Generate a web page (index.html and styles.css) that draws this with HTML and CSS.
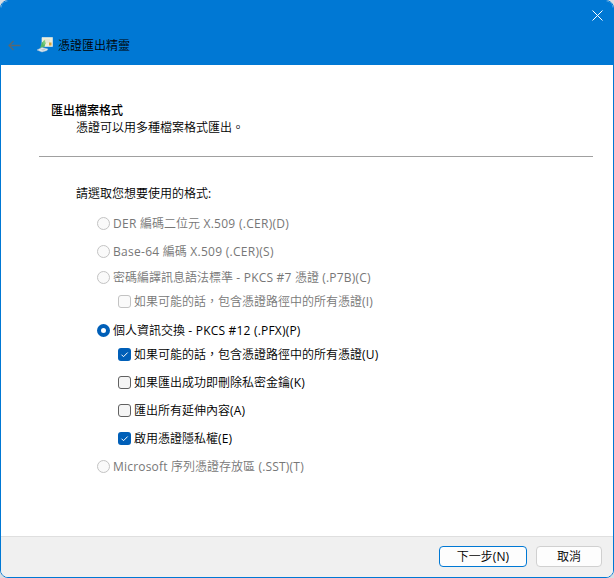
FILE: index.html
```html
<!DOCTYPE html>
<html lang="zh-Hant">
<head>
<meta charset="utf-8">
<title>憑證匯出精靈</title>
<link rel="stylesheet" href="styles.css">
</head>
<body>
<main class="window">
  <header class="titlebar">
    <div class="caption">
      <svg class="close" width="11" height="11" viewBox="0 0 11 11"><path d="M.5.5l10 10M10.500.5l-10 10"/></svg>
    </div>
    <div class="heading">
      <svg class="back" width="13" height="11" viewBox="0 0 13 11"><path d="M12.500 5.500H1M5.500 1L1 5.500L5.500 10"/></svg>
      <svg class="app-icon" width="17" height="16" viewBox="0 0 17 16">
        <path d="M5 .5h10.500v9H5z" fill="#eeeed8" stroke="#dce6e2" stroke-width=".7"/>
        <path d="M7 3h6M8 5h5" stroke="#cfd8cb" stroke-width=".8"/>
        <path d="M12 5.500h2.500v3H12z" fill="#d9a437"/>
        <path d="M5 5.500l2-1.500 1.500 2-1 4-4.500 1z" fill="#55b566"/>
        <path d="M6 4l2-1 .5 4-2 1z" fill="#7fce7e"/>
        <path d="M0 13l5-2.500 6 1.500-1 1.500-5 1.500z" fill="#e3ebf0" stroke="#a9bfce" stroke-width=".5"/>
        <path d="M3 12.700l4-1 2 .7-3 1.300z" fill="#b9c9d4"/>
      </svg>
      <h1 class="title">憑證匯出精靈</h1>
    </div>
  </header>
  <section class="intro">
    <h2 class="intro-title">匯出檔案格式</h2>
    <p class="intro-text">憑證可以用多種檔案格式匯出。</p>
  </section>
  <section class="options">
    <p class="prompt">請選取您想要使用的格式<span class="latin">:</span></p>
    <div class="row disabled wide"><span class="radio"></span><span class="label"><span class="latin">DER </span>編碼二位元<span class="latin"> X.509 (.CER)(D)</span></span></div>
    <div class="row disabled wide"><span class="radio"></span><span class="label"><span class="latin">Base-64 </span>編碼<span class="latin"> X.509 (.CER)(S)</span></span></div>
    <div class="row disabled short"><span class="radio"></span><span class="label">密碼編譯訊息語法標準<span class="latin"> - PKCS #7 </span>憑證<span class="latin"> (.P7B)(C)</span></span></div>
    <div class="row disabled sub"><span class="check"></span><span class="label">如果可能的話，包含憑證路徑中的所有憑證<span class="latin">(I)</span></span></div>
    <div class="row main"><span class="radio on"></span><span class="label">個人資訊交換<span class="latin"> - PKCS #12 (.PFX)(P)</span></span></div>
    <div class="row sub first"><span class="check on"><svg width="13" height="13" viewBox="0 0 13 13"><path d="M3.500 6.700L5.500 8.700L9.700 4.500"/></svg></span><span class="label">如果可能的話，包含憑證路徑中的所有憑證<span class="latin">(U)</span></span></div>
    <div class="row sub"><span class="check"></span><span class="label">如果匯出成功即刪除私密金鑰<span class="latin">(K)</span></span></div>
    <div class="row sub"><span class="check"></span><span class="label">匯出所有延伸內容<span class="latin">(A)</span></span></div>
    <div class="row sub"><span class="check on"><svg width="13" height="13" viewBox="0 0 13 13"><path d="M3.500 6.700L5.500 8.700L9.700 4.500"/></svg></span><span class="label">啟用憑證隱私權<span class="latin">(E)</span></span></div>
    <div class="row disabled"><span class="radio"></span><span class="label"><span class="latin">Microsoft </span>序列憑證存放區<span class="latin"> (.SST)(T)</span></span></div>
  </section>
  <footer class="footer">
    <button class="button primary">下一步<span class="latin">(N)</span></button>
    <button class="button">取消</button>
  </footer>
</main>
</body>
</html>
```
FILE: styles.css
```css
* {
  box-sizing: border-box;
}

body {
  margin: 0;
  background: #d9dde2;
  color: #000;
  font: 350 12px/16px "Open Sans", "Noto Sans CJK TC", sans-serif;
}

h1,
h2,
p {
  margin: 0;
  font-size: inherit;
  font-weight: inherit;
}

svg {
  display: block;
  flex: none;
  fill: none;
}

.window {
  display: flex;
  flex-direction: column;
  width: 614px;
  height: 578px;
  overflow: hidden;
  border: 1px solid #0078d4;
  border-radius: 8px;
  background: #fff;
}

.titlebar {
  height: 64px;
  background: #0078d4;
}

.caption {
  display: flex;
  justify-content: flex-end;
  height: 33px;
  padding: 9px 10px 0 0;
}

.close {
  stroke: #fff;
}

.heading {
  display: flex;
  align-items: center;
  height: 22px;
  padding-left: 7px;
}

.back {
  stroke: #5a6870;
  stroke-width: 1.3;
}

.app-icon {
  margin-left: 16px;
}

.title {
  padding-top: 2px;
  margin-left: 4px;
}

.intro {
  height: 92px;
  margin: 0 20px 0 38px;
  padding: 38px 0 0 12px;
  border-bottom: 1px solid #a0a0a0;
}

.intro-title {
  height: 17px;
  font-weight: 500;
}

.intro-text {
  padding-left: 25px;
}

.options {
  flex: 1;
  padding: 29px 0 0 75px;
}

.prompt {
  height: 23px;
}

.row {
  display: flex;
  align-items: center;
  gap: 3px;
  height: 28px;
  padding-left: 21px;
  white-space: nowrap;
}

.row.short {
  height: 25px;
}

.row.sub {
  padding-left: 42px;
}

.row.disabled.sub {
  height: 23px;
}

.row.main {
  height: 34px;
}

.row.sub.first {
  margin-top: -7px;
}

.label {
  padding-top: 2px;
}

.short .label,
.disabled.sub .label {
  padding-top: 1px;
}

.latin {
  font-weight: 400;
  letter-spacing: .2px;
}

.wide .latin {
  letter-spacing: .28px;
}

.disabled {
  color: #777;
}

.radio,
.check {
  flex: none;
  width: 13px;
  height: 13px;
  border: 1px solid #616161;
  border-radius: 3px;
  background: #f5f5f5;
}

.radio {
  border-radius: 50%;
}

.disabled .radio,
.disabled .check {
  border-color: #c3c3c3;
  background: #fafafa;
}

.radio.on {
  border: 4px solid #005fb8;
  background: #fff;
}

.check.on {
  border: 0;
  background: #005fb8;
}

.check.on svg {
  stroke: #fff;
}

.footer {
  display: flex;
  gap: 9px;
  justify-content: flex-end;
  height: 41px;
  padding: 9px 11px 0 0;
  border-top: 1px solid #dfdfdf;
  background: #f0f0f0;
}

.button {
  width: 66px;
  height: 21px;
  padding: 0;
  border: 1px solid #d0d0d0;
  border-radius: 4px;
  background: #fdfdfd;
  color: #000;
  font: inherit;
  line-height: 19px;
}

.button.primary {
  width: 88px;
  border-color: #0078d4;
}
```
